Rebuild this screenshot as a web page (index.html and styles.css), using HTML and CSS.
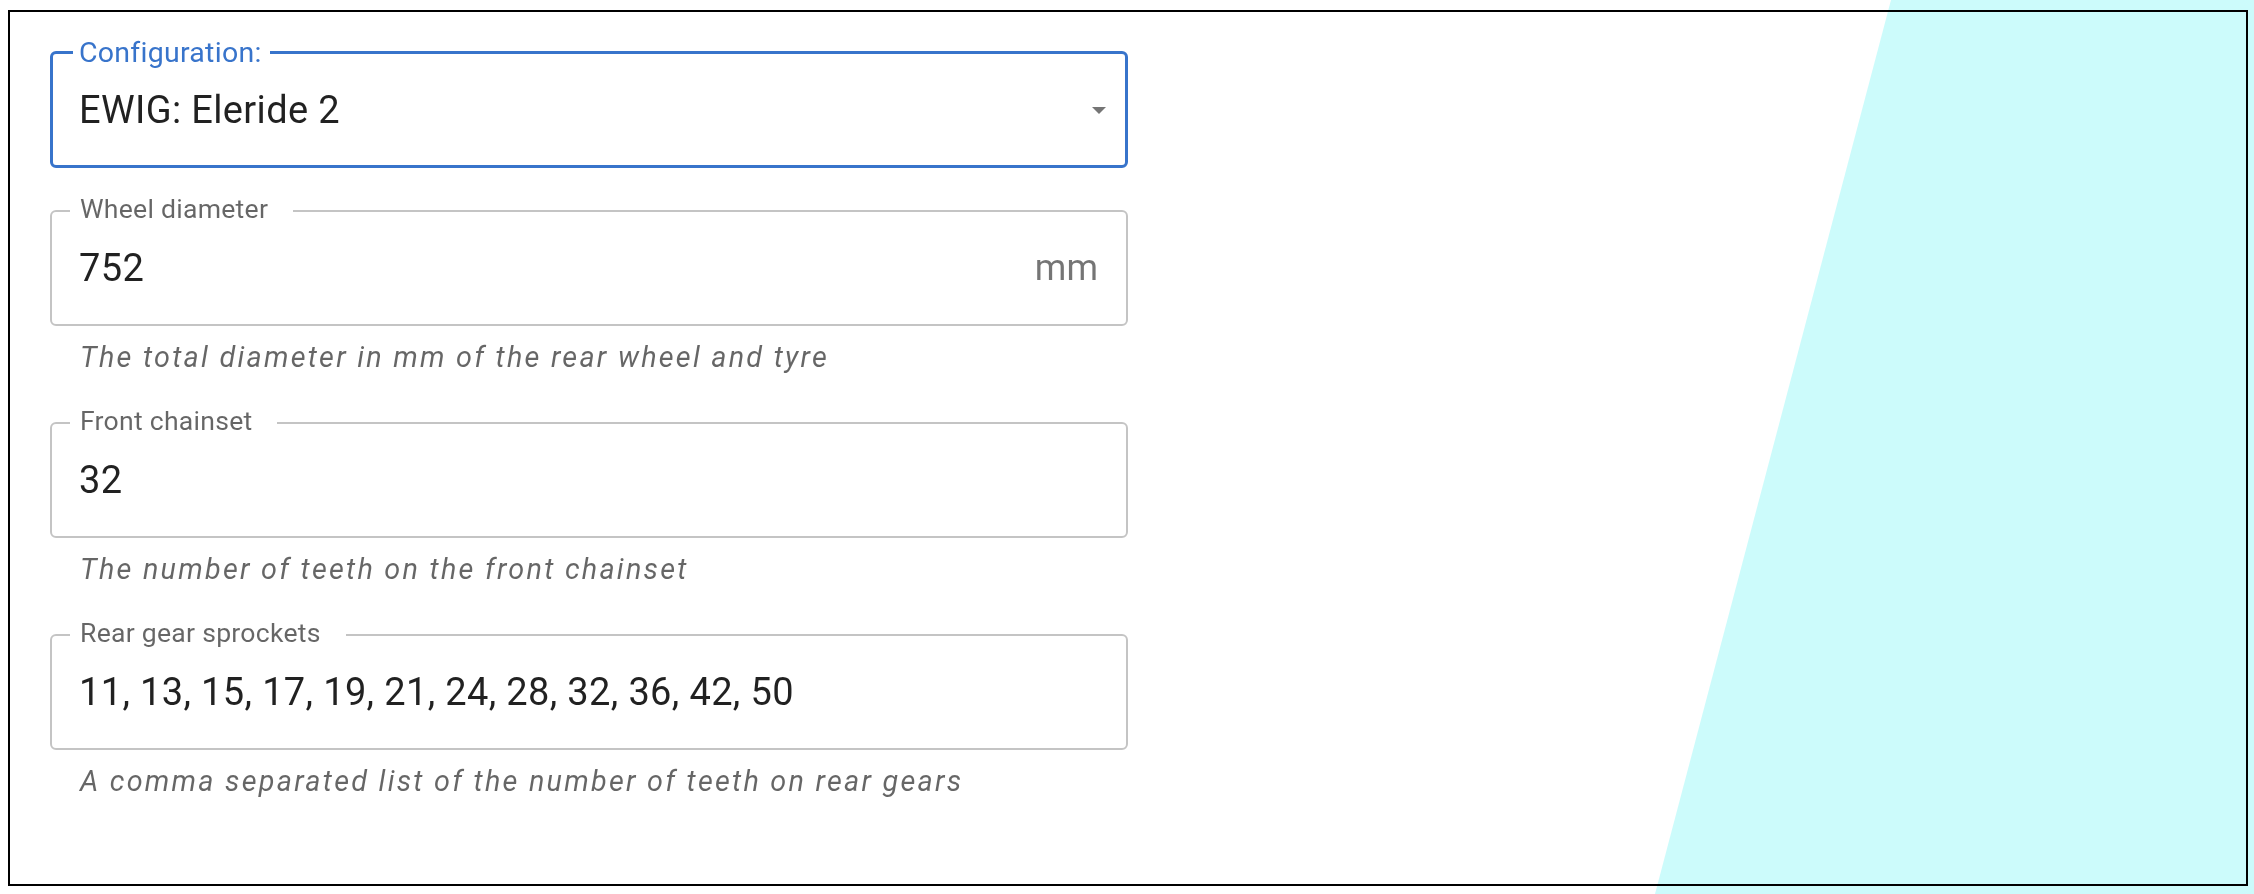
FILE: index.html
```html
<!DOCTYPE html>
<html lang="en">
<head>
<meta charset="utf-8">
<title>Gear configuration</title>
<link rel="stylesheet" href="styles.css">
</head>
<body>
<div class="backdrop"></div>
<main class="frame">
  <fieldset class="field field-focused">
    <legend class="label">Configuration:</legend>
    <div class="row">
      <span class="value">EWIG: Eleride 2</span>
      <svg class="arrow" width="14" height="7" viewBox="0 0 14 7" aria-hidden="true"><polygon points="0,0 14,0 7,7"/></svg>
    </div>
  </fieldset>

  <div class="group">
    <fieldset class="field">
      <legend class="label">Wheel diameter</legend>
      <div class="row">
        <span class="value">752</span>
        <span class="adorn">mm</span>
      </div>
    </fieldset>
    <p class="helper">The total diameter in mm of the rear wheel and tyre</p>
  </div>

  <div class="group">
    <fieldset class="field">
      <legend class="label">Front chainset</legend>
      <div class="row">
        <span class="value">32</span>
      </div>
    </fieldset>
    <p class="helper">The number of teeth on the front chainset</p>
  </div>

  <div class="group">
    <fieldset class="field">
      <legend class="label">Rear gear sprockets</legend>
      <div class="row">
        <span class="value">11, 13, 15, 17, 19, 21, 24, 28, 32, 36, 42, 50</span>
      </div>
    </fieldset>
    <p class="helper">A comma separated list of the number of teeth on rear gears</p>
  </div>
</main>
</body>
</html>
```

FILE: styles.css
```css
html, body {
  height: 100%;
}

body {
  margin: 10px 6px 8px 8px;
  background: #ffffff;
  font-family: Roboto, "Liberation Sans", Arial, sans-serif;
  color: rgba(0, 0, 0, 0.87);
}

.backdrop {
  position: fixed;
  inset: 0;
  z-index: -1;
  background: #ccfbfb;
  clip-path: polygon(1891px 0, 100% 0, 100% 100%, 1655px 100%);
}

.frame {
  box-sizing: border-box;
  height: 876px;
  border: 2px solid #000000;
  padding: 24px 0 0 40px;
  display: flex;
  flex-direction: column;
  align-items: flex-start;
}

.field {
  box-sizing: border-box;
  width: 1078px;
  margin: 0;
  padding: 18px 0 33px 0;
  min-width: 0;
  border: 2px solid rgba(0, 0, 0, 0.23);
  border-radius: 6px;
  background: transparent;
}

.field-focused {
  border: 3px solid #3874cb;
  padding: 18px 0 32px 0;
  margin-bottom: 27px;
}

.label {
  margin-left: 18px;
  padding: 0 25px 4px 10px;
  font-size: 26.6px;
  line-height: 28px;
  letter-spacing: 0.00938em;
  color: rgba(0, 0, 0, 0.6);
  white-space: nowrap;
}

.field-focused .label {
  margin-left: 20px;
  padding: 0 8px 0 6px;
  font-size: 28.5px;
  line-height: 33px;
  color: #3874cb;
}

.row {
  display: flex;
  align-items: center;
  height: 46px;
  padding: 0 28px 0 27px;
}

.field-focused .row {
  padding: 0 19px 0 26px;
}

.value {
  flex: 1;
  font-size: 38px;
  line-height: 46px;
  letter-spacing: 0.00938em;
  color: rgba(0, 0, 0, 0.87);
  white-space: nowrap;
}

.adorn {
  font-size: 36px;
  line-height: 46px;
  color: rgba(0, 0, 0, 0.54);
}

.arrow {
  display: block;
  fill: rgba(0, 0, 0, 0.54);
}

.group {
  margin-bottom: 35px;
}

.helper {
  margin: 16px 0 0 30px;
  font-size: 28.8px;
  line-height: 30px;
  font-style: italic;
  letter-spacing: 2.25px;
  color: rgba(0, 0, 0, 0.6);
}
```
